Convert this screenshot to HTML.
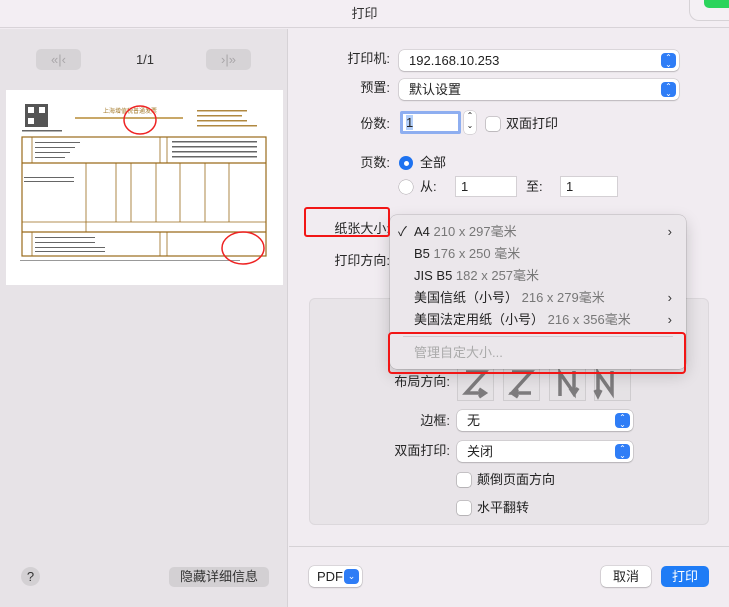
<!DOCTYPE html>
<html><head><meta charset="utf-8"><style>
*{box-sizing:border-box;margin:0;padding:0}
body{width:729px;height:607px;overflow:hidden;position:relative;background:#f1ecf1;font-family:"Liberation Sans","Noto Sans CJK SC",sans-serif;font-size:13px;line-height:16px;color:#222}
.a{position:absolute}
.lbl{position:absolute;text-align:right;font-size:13px;color:#262626}
.pop{position:absolute;height:21px;background:#fff;border-radius:5px;box-shadow:0 0 0 .5px rgba(0,0,0,.18),0 1px 1.5px rgba(0,0,0,.15);padding-left:10px;line-height:21px;font-size:13px}
.pop .ar{position:absolute;right:3px;top:3px;width:15px;height:15px;background:#2f7df6;border-radius:4px;color:#fff;font-size:8px;line-height:7px;text-align:center;padding-top:1px}
.inp{position:absolute;height:21px;background:#fff;border:1px solid #d4d0d4;padding-left:5px;line-height:19px;font-size:13px}
.cb{position:absolute;width:14px;height:14px;background:#fff;border-radius:3px;box-shadow:0 0 0 .5px rgba(0,0,0,.3),0 .5px 1px rgba(0,0,0,.15)}
.mi{position:absolute;left:24px;font-size:13px;color:#222;height:22px;line-height:22px}
.mi span{color:#777}
.chev{position:absolute;right:14px;font-size:13px;color:#333;height:22px;line-height:22px}
.ic{position:absolute;top:366px;width:37px;height:35px;border:1px solid #cfcccf;background:#e5e2e5}
</style></head><body>
<div class="a" style="left:0;top:0;width:729px;height:28px;background:#f3eef3;border-bottom:1px solid #d8d3d8"></div>
<div class="a" style="left:0;top:6px;width:729px;text-align:center;font-size:13px;color:#333">打印</div>
<div class="a" style="left:690px;top:-10px;width:50px;height:30px;border-radius:9px;background:#f4f0f4;box-shadow:0 0 0 1px #d6d2d6"></div>
<div class="a" style="left:704px;top:-6px;width:30px;height:14px;border-radius:5px;background:#2bd45c"></div>
<div class="a" style="left:0;top:29px;width:288px;height:578px;background:#e7e3e7;border-right:1px solid #d6d2d6"></div>
<div class="a" style="left:36px;top:49px;width:45px;height:21px;border-radius:5px;background:#d6d3d6;color:#a9a6a9;font-size:13px;line-height:21px;text-align:center">«|‹</div>
<div class="a" style="left:206px;top:49px;width:45px;height:21px;border-radius:5px;background:#d6d3d6;color:#a9a6a9;font-size:13px;line-height:21px;text-align:center">›|»</div>
<div class="a" style="left:130px;top:52px;width:30px;text-align:center;font-size:13px;color:#333">1/1</div>
<svg class="a" style="left:6px;top:90px" width="278" height="196" viewBox="6 90 278 196">
<rect x="6" y="90" width="277" height="195" fill="#fff"/>
<rect x="25" y="104" width="23" height="23" fill="#555"/>
<rect x="28" y="107" width="6" height="6" fill="#fff"/><rect x="39" y="107" width="6" height="6" fill="#fff"/><rect x="28" y="118" width="6" height="6" fill="#fff"/>
<text x="103" y="113" font-size="6" fill="#a47a2a" font-family="Noto Sans CJK SC">上海增值税普通发票</text>
<line x1="75" y1="118" x2="183" y2="118" stroke="#c9a868" stroke-width="2"/>
<g fill="#b08840"><rect x="197" y="110" width="50" height="1.5"/><rect x="197" y="115" width="45" height="1.5"/><rect x="197" y="120" width="50" height="1.5"/><rect x="197" y="125" width="60" height="1.5"/><rect x="22" y="130" width="40" height="1.5" fill="#666"/></g>
<ellipse cx="140" cy="120" rx="16" ry="14" fill="none" stroke="#e22" stroke-width="1.5"/>
<g fill="none" stroke="#9a6a1a" stroke-width="0.8">
<rect x="22" y="137" width="244" height="119" stroke-width="1.2"/>
<line x1="22" y1="163" x2="266" y2="163" stroke-width="1.2"/>
<line x1="22" y1="222" x2="266" y2="222"/>
<line x1="22" y1="232" x2="266" y2="232" stroke-width="1.2"/>
<line x1="32" y1="137" x2="32" y2="163"/><line x1="160" y1="137" x2="160" y2="163"/><line x1="167" y1="137" x2="167" y2="163"/>
<line x1="86" y1="163" x2="86" y2="232"/><line x1="116" y1="163" x2="116" y2="222"/><line x1="131" y1="163" x2="131" y2="222"/><line x1="156" y1="163" x2="156" y2="222"/><line x1="180" y1="163" x2="180" y2="222"/><line x1="205" y1="163" x2="205" y2="222"/><line x1="229" y1="163" x2="229" y2="222"/>
<line x1="32" y1="232" x2="32" y2="256"/><line x1="160" y1="232" x2="160" y2="256"/><line x1="167" y1="232" x2="167" y2="256"/>
</g>
<g fill="#666"><rect x="35" y="142" width="45" height="1"/><rect x="35" y="147" width="40" height="1"/><rect x="35" y="152" width="35" height="1"/><rect x="35" y="157" width="30" height="1"/>
<rect x="172" y="141" width="85" height="1.5"/><rect x="172" y="146" width="85" height="1.5"/><rect x="172" y="151" width="85" height="1.5"/><rect x="172" y="156" width="85" height="1.5"/>
<rect x="24" y="177" width="50" height="1"/><rect x="24" y="181" width="50" height="1"/>
<rect x="35" y="237" width="60" height="1"/><rect x="35" y="242" width="60" height="1"/><rect x="35" y="247" width="70" height="1"/><rect x="35" y="251" width="70" height="1"/>
<rect x="20" y="260" width="220" height="1" fill="#999"/></g>
<ellipse cx="243" cy="248" rx="21" ry="16" fill="none" stroke="#e22" stroke-width="1.5"/>
</svg>
<div class="a" style="left:21px;top:567px;width:19px;height:19px;border-radius:50%;background:#d3d0d3;text-align:center;line-height:19px;font-size:13px;color:#333">?</div>
<div class="a" style="left:169px;top:567px;width:100px;height:20px;border-radius:5px;background:#d3d0d3;text-align:center;line-height:20px;font-size:13px;color:#333">隐藏详细信息</div>
<div class="lbl" style="left:300px;top:51px;width:90px">打印机:</div>
<div class="pop" style="left:399px;top:50px;width:280px">192.168.10.253<div class="ar">⌃<br>⌄</div></div>
<div class="lbl" style="left:300px;top:80px;width:90px">预置:</div>
<div class="pop" style="left:399px;top:79px;width:280px">默认设置<div class="ar">⌃<br>⌄</div></div>
<div class="lbl" style="left:300px;top:116px;width:90px">份数:</div>
<div class="a" style="left:400px;top:111px;width:61px;height:23px;background:#fff;border:3px solid #8eaef0;border-radius:2px;padding-left:3px;line-height:17px;font-size:13px"><span style="background:#b3cffa">1</span></div>
<div class="a" style="left:464px;top:111px;width:12px;height:23px;background:#fff;border-radius:4px;box-shadow:0 0 0 .5px rgba(0,0,0,.2);font-size:8px;text-align:center;line-height:10px">⌃<br>⌄</div>
<div class="cb" style="left:486px;top:117px"></div>
<div class="a" style="left:506px;top:116px">双面打印</div>
<div class="lbl" style="left:300px;top:155px;width:90px">页数:</div>
<div class="a" style="left:399px;top:156px;width:14px;height:14px;border-radius:50%;background:#1e72f0"><div class="a" style="left:4.5px;top:4.5px;width:5px;height:5px;border-radius:50%;background:#fff"></div></div>
<div class="a" style="left:420px;top:155px">全部</div>
<div class="a" style="left:399px;top:180px;width:14px;height:14px;border-radius:50%;background:#fff;box-shadow:0 0 0 .5px rgba(0,0,0,.3)"></div>
<div class="a" style="left:420px;top:179px">从:</div>
<div class="inp" style="left:455px;top:176px;width:62px">1</div>
<div class="a" style="left:526px;top:179px">至:</div>
<div class="inp" style="left:560px;top:176px;width:58px">1</div>
<div class="lbl" style="left:300px;top:221px;width:90px">纸张大小:</div>
<div class="lbl" style="left:300px;top:253px;width:90px">打印方向:</div>
<div class="a" style="left:309px;top:298px;width:400px;height:227px;background:#e8e4e8;border:1px solid #dcd8dc;border-radius:6px"></div>
<div class="lbl" style="left:300px;top:374px;width:150px">布局方向:</div>
<div class="ic" style="left:457px"></div><div class="ic" style="left:503px"></div><div class="ic" style="left:549px"></div><div class="ic" style="left:594px"></div>
<svg class="a" style="left:457px;top:366px" width="175" height="36" fill="none" stroke="#7d7b7d" stroke-width="3.5">
<path d="M9 6h19L9 27h19M22 23l6 4-6 4"/><path d="M55 6h19L55 27h19M61 23l-6 4 6 4"/><path d="M103 30V7l14 20V5M113 22l4 6 4-6"/><path d="M141 30V7l14 20V5M138 24l3 6 3-6"/>
</svg>
<div class="lbl" style="left:300px;top:413px;width:150px">边框:</div>
<div class="pop" style="left:457px;top:410px;width:176px">无<div class="ar">⌃<br>⌄</div></div>
<div class="lbl" style="left:300px;top:443px;width:150px">双面打印:</div>
<div class="pop" style="left:457px;top:441px;width:176px">关闭<div class="ar">⌃<br>⌄</div></div>
<div class="cb" style="left:457px;top:473px"></div><div class="a" style="left:477px;top:472px">颠倒页面方向</div>
<div class="cb" style="left:457px;top:501px"></div><div class="a" style="left:477px;top:500px">水平翻转</div>
<div class="a" style="left:390px;top:215px;width:296px;height:154px;background:#ebe7eb;border-radius:7px;box-shadow:0 0 0 .5px rgba(0,0,0,.2),0 6px 16px rgba(0,0,0,.18)">
<div class="a" style="left:8px;top:6px;height:22px;line-height:22px;font-size:13px">✓</div>
<div class="mi" style="top:6px">A4 <span>210 x 297毫米</span></div><div class="chev" style="top:6px">›</div>
<div class="mi" style="top:28px">B5 <span>176 x 250 毫米</span></div>
<div class="mi" style="top:50px">JIS B5 <span>182 x 257毫米</span></div>
<div class="mi" style="top:72px">美国信纸（小号） <span>216 x 279毫米</span></div><div class="chev" style="top:72px">›</div>
<div class="mi" style="top:94px">美国法定用纸（小号） <span>216 x 356毫米</span></div><div class="chev" style="top:94px">›</div>
<div class="a" style="left:13px;top:121px;width:270px;height:1px;background:#d0ccd0"></div>
<div class="mi" style="top:127px;color:#aaa">管理自定大小...</div>
</div>
<div class="a" style="left:304px;top:207px;width:86px;height:30px;border:2.5px solid #f21616;border-radius:3px"></div>
<div class="a" style="left:388px;top:332px;width:298px;height:42px;border:2.5px solid #f21616;border-radius:4px"></div>
<div class="a" style="left:289px;top:546px;width:440px;height:1px;background:#d6d2d6"></div>
<div class="pop" style="left:309px;top:566px;width:53px;padding-left:8px">PDF<div class="ar" style="top:3px;font-size:9px;line-height:13px">⌄</div></div>
<div class="pop" style="left:601px;top:566px;width:50px;padding-left:0;text-align:center">取消</div>
<div class="a" style="left:661px;top:566px;width:48px;height:21px;border-radius:5px;background:#1f7cf6;color:#fff;text-align:center;line-height:21px">打印</div>
</body></html>
